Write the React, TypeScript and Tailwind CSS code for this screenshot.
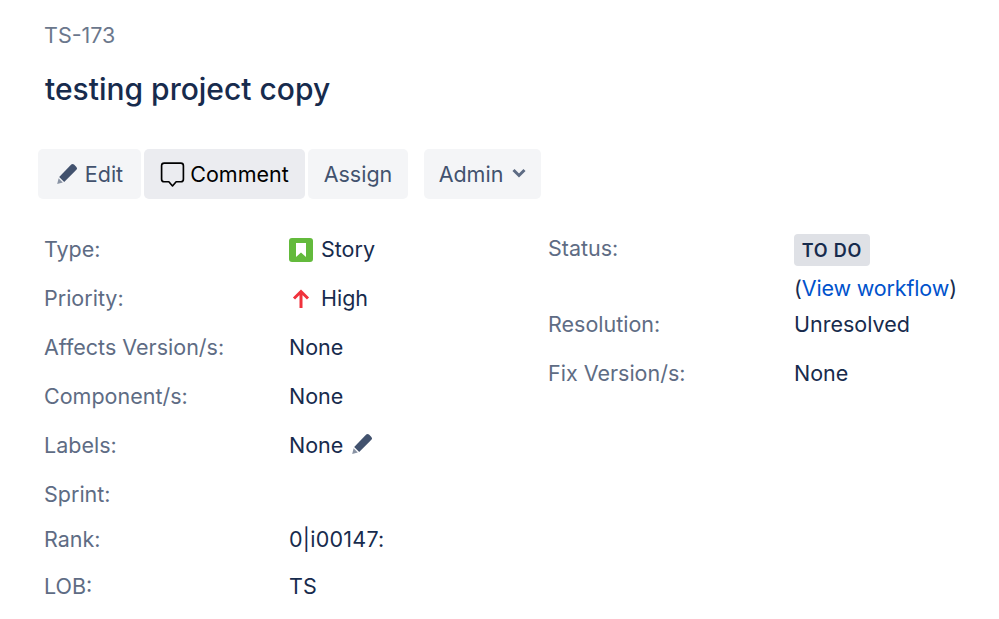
const labelCls = "shrink-0 text-[#5e6c84]";

function PencilIcon({ className }: { className: string }) {
  return (
    <svg viewBox="0 0 22 22" className={className}>
      <path d="M15.200 1.600a2 2 0 0 1 2.800 0l2.400 2.400a2 2 0 0 1 0 2.800L8.200 19 3.200 14z" fill="#42526e" />
      <path d="M2.600 15.200l4.200 4.200-5.600 1.600z" fill="#8993a4" />
    </svg>
  );
}

function Row({ label, h, children }: { label: string; h: string; children?: React.ReactNode }) {
  return (
    <div className={`flex items-center ${h}`}>
      <div className={`w-[245px] ${labelCls}`}>{label}</div>
      <div className="flex items-center text-[#172b4d]">{children}</div>
    </div>
  );
}

function ActionButton({ children, className }: { children: React.ReactNode; className: string }) {
  return (
    <div className={`flex h-[50px] items-center justify-center rounded-[5px] ${className}`}>
      {children}
    </div>
  );
}

export default function App() {
  return (
    <div className="h-[619px] w-[999px] overflow-hidden bg-white text-[21.5px] font-['Inter',sans-serif]">
      <div className="pl-[44px] pt-[21px] leading-[28px] text-[#6b778c]">TS-173</div>
      <h1 className="pl-[45px] pt-[20px] text-[30px] font-medium leading-[40px] text-[#172b4d]">testing project copy</h1>

      <div className="flex pl-[38px] pt-[40px]">
        <ActionButton className="w-[103px] gap-[7px] bg-[#f4f5f7] text-[#42526e]">
          <PencilIcon className="h-[22px] w-[22px]" />
          <span>Edit</span>
        </ActionButton>
        <ActionButton className="ml-[3px] w-[161px] gap-[5px] bg-[#ebecf0] text-black">
          <svg viewBox="0 0 24 26" className="h-[27px] w-[25px]" fill="none" stroke="#000" strokeWidth="1.6" strokeLinejoin="round">
            <path d="M4 2h16a2.500 2.500 0 0 1 2.500 2.500v13a2.500 2.500 0 0 1-2.500 2.500h-4.500l-3.500 4-3.500-4H4a2.500 2.500 0 0 1-2.500-2.500v-13A2.500 2.500 0 0 1 4 2z" />
          </svg>
          <span>Comment</span>
        </ActionButton>
        <ActionButton className="ml-[3px] w-[100px] bg-[#f4f5f7] text-[#42526e]">Assign</ActionButton>
        <ActionButton className="ml-[16px] w-[117px] gap-[9px] bg-[#f4f5f7] text-[#42526e]">
          <span>Admin</span>
          <svg viewBox="0 0 14 10" className="mb-[2px] h-[10px] w-[14px]" fill="none" stroke="#5e6c84" strokeWidth="3">
            <path d="M1.500 2l5.500 5.500L12.500 2" />
          </svg>
        </ActionButton>
      </div>

      <div className="flex pl-[44px] pt-[26px]">
        <div className="w-[504px] shrink-0">
          <Row label="Type:" h="h-[49px]">
            <svg viewBox="0 0 24 24" className="mr-[8px] h-[24px] w-[24px]">
              <rect width="24" height="24" rx="3" fill="#63ba3c" />
              <path d="M7 5h10v14l-5-4.500L7 19z" fill="#fff" />
            </svg>
            Story
          </Row>
          <Row label="Priority:" h="h-[49px]">
            <svg viewBox="0 0 18 20" className="ml-[3px] mr-[11px] h-[20px] w-[18px]" fill="none" stroke="#f0323c" strokeWidth="3">
              <path d="M9 19V3M2 9.500L9 2.500l7 7" />
            </svg>
            High
          </Row>
          <Row label="Affects Version/s:" h="h-[49px]">None</Row>
          <Row label="Component/s:" h="h-[49px]">None</Row>
          <Row label="Labels:" h="h-[49px]">
            None
            <PencilIcon className="ml-[8px] mb-[4px] h-[22px] w-[22px]" />
          </Row>
          <Row label="Sprint:" h="h-[49px]" />
          <Row label="Rank:" h="h-[41px]">
            <span className="tracking-[0.25px]">0|i00147:</span>
          </Row>
          <Row label="LOB:" h="h-[53px]">TS</Row>
        </div>
        <div>
          <div className="flex">
            <div className={`w-[246px] ${labelCls} pt-[8px] leading-[31px]`}>Status:</div>
            <div className="text-[#172b4d]">
              <div className="mt-[9px] flex h-[32px] w-[76px] items-center justify-center rounded-[4px] bg-[#dfe1e6] text-[18px] font-semibold tracking-[0.8px]">TO DO</div>
              <div className="flex h-[44px] items-center tracking-[-0.15px]">
                (<span className="text-[#0052cc]">View workflow</span>)
              </div>
            </div>
          </div>
          <div className="flex h-[29px] items-center">
            <div className={`w-[246px] ${labelCls}`}>Resolution:</div>
            <div className="text-[#172b4d]">Unresolved</div>
          </div>
          <div className="flex h-[68px] items-center">
            <div className={`w-[246px] ${labelCls}`}>Fix Version/s:</div>
            <div className="text-[#172b4d]">None</div>
          </div>
        </div>
      </div>
    </div>
  );
}
